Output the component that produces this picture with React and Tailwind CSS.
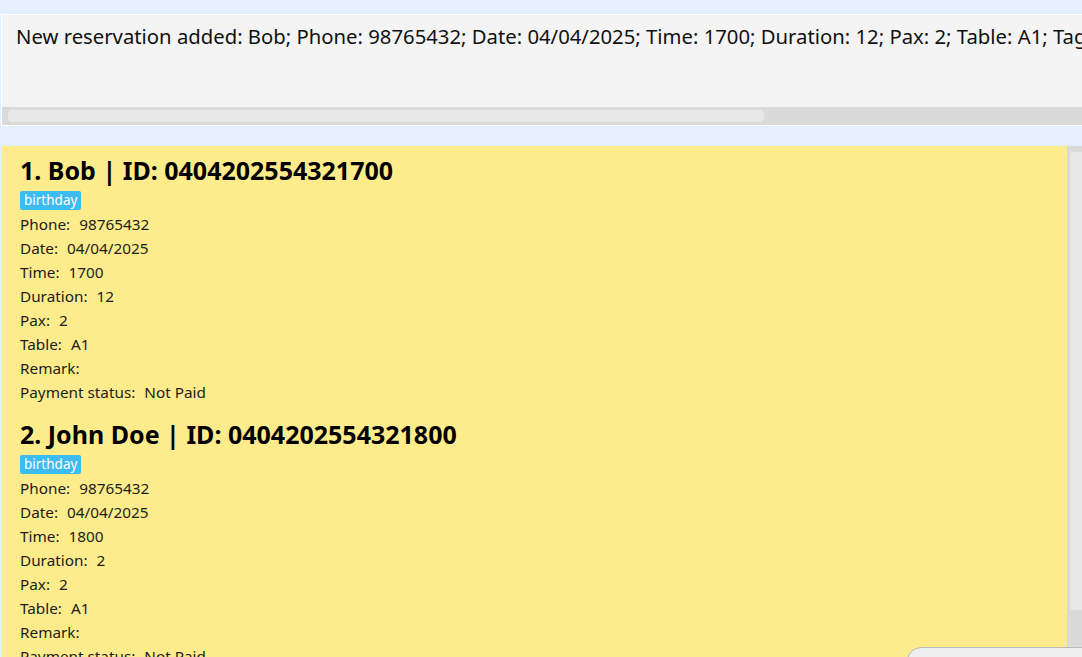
import React from "react";

const reservations = [
  {
    n: 1,
    name: "Bob",
    id: "0404202554321700",
    tag: "birthday",
    rows: [
      ["Phone:", "98765432"],
      ["Date:", "04/04/2025"],
      ["Time:", "1700"],
      ["Duration:", "12"],
      ["Pax:", "2"],
      ["Table:", "A1"],
      ["Remark:", ""],
      ["Payment status:", "Not Paid"],
    ],
  },
  {
    n: 2,
    name: "John Doe",
    id: "0404202554321800",
    tag: "birthday",
    rows: [
      ["Phone:", "98765432"],
      ["Date:", "04/04/2025"],
      ["Time:", "1800"],
      ["Duration:", "2"],
      ["Pax:", "2"],
      ["Table:", "A1"],
      ["Remark:", ""],
      ["Payment status:", "Not Paid"],
    ],
  },
];

function Card({ r }) {
  return (
    <div className="pl-[18px] pt-[8px] pb-[6px]">
      <div className="h-[32px] leading-[32px] text-[25px] font-bold text-black whitespace-nowrap">
        {r.n}. {r.name} | ID: {r.id}
      </div>
      <div className="mt-[5px] flex">
        <span className="h-[19px] leading-[19px] px-[4px] rounded-[2px] bg-[#3dbcf2] text-white text-[13.5px]">
          {r.tag}
        </span>
      </div>
      <div className="mt-[2px]">
        {r.rows.map(([l, v]) => (
          <div key={l} className="h-[24px] leading-[24px] text-[15.3px] text-[#1c1c1c] whitespace-nowrap flex">
            <span>{l}</span>
            <span className="ml-[9px]">{v}</span>
          </div>
        ))}
      </div>
    </div>
  );
}

export default function App() {
  return (
    <div
      className="relative w-[1082px] h-[657px] overflow-hidden bg-[#e3f0fb] flex flex-col"
      style={{ fontFamily: '"Noto Sans", "Open Sans", sans-serif' }}
    >
      <div className="h-[14px] shrink-0" />
      <div className="shrink-0 ml-[1px] border-t border-b border-l border-white bg-[#f4f4f4] flex flex-col">
        <div className="h-[92px] pl-[14px] pt-[7px] overflow-hidden">
          <div className="text-[20.3px] leading-[28px] text-[#111] whitespace-nowrap">
            New reservation added: Bob; Phone: 98765432; Date: 04/04/2025; Time: 1700; Duration: 12; Pax: 2; Table: A1; Tag: birthday
          </div>
        </div>
        <div className="h-[18px] bg-[#dadada] pt-[3px] pl-[6px]">
          <div className="h-[12px] w-[756px] rounded-[4px] bg-[#e8e8e8]" />
        </div>
      </div>
      <div className="h-[20px] shrink-0" />
      <div className="flex-1 flex min-h-0 pl-[2px]">
        <div className="flex-1 bg-[#feec8c] overflow-hidden">
          {reservations.map((r) => (
            <Card key={r.n} r={r} />
          ))}
        </div>
        <div className="w-[15px] bg-[#dadada] pt-[6px] pl-[3px]">
          <div className="h-[458px] bg-[#e8e8e8] rounded-l-[3px]" />
        </div>
      </div>
      <div className="absolute left-[907px] top-[647px] w-[200px] h-[40px] rounded-tl-[14px] border border-[#b9b9b9] bg-[#eeeeee]" />
    </div>
  );
}
